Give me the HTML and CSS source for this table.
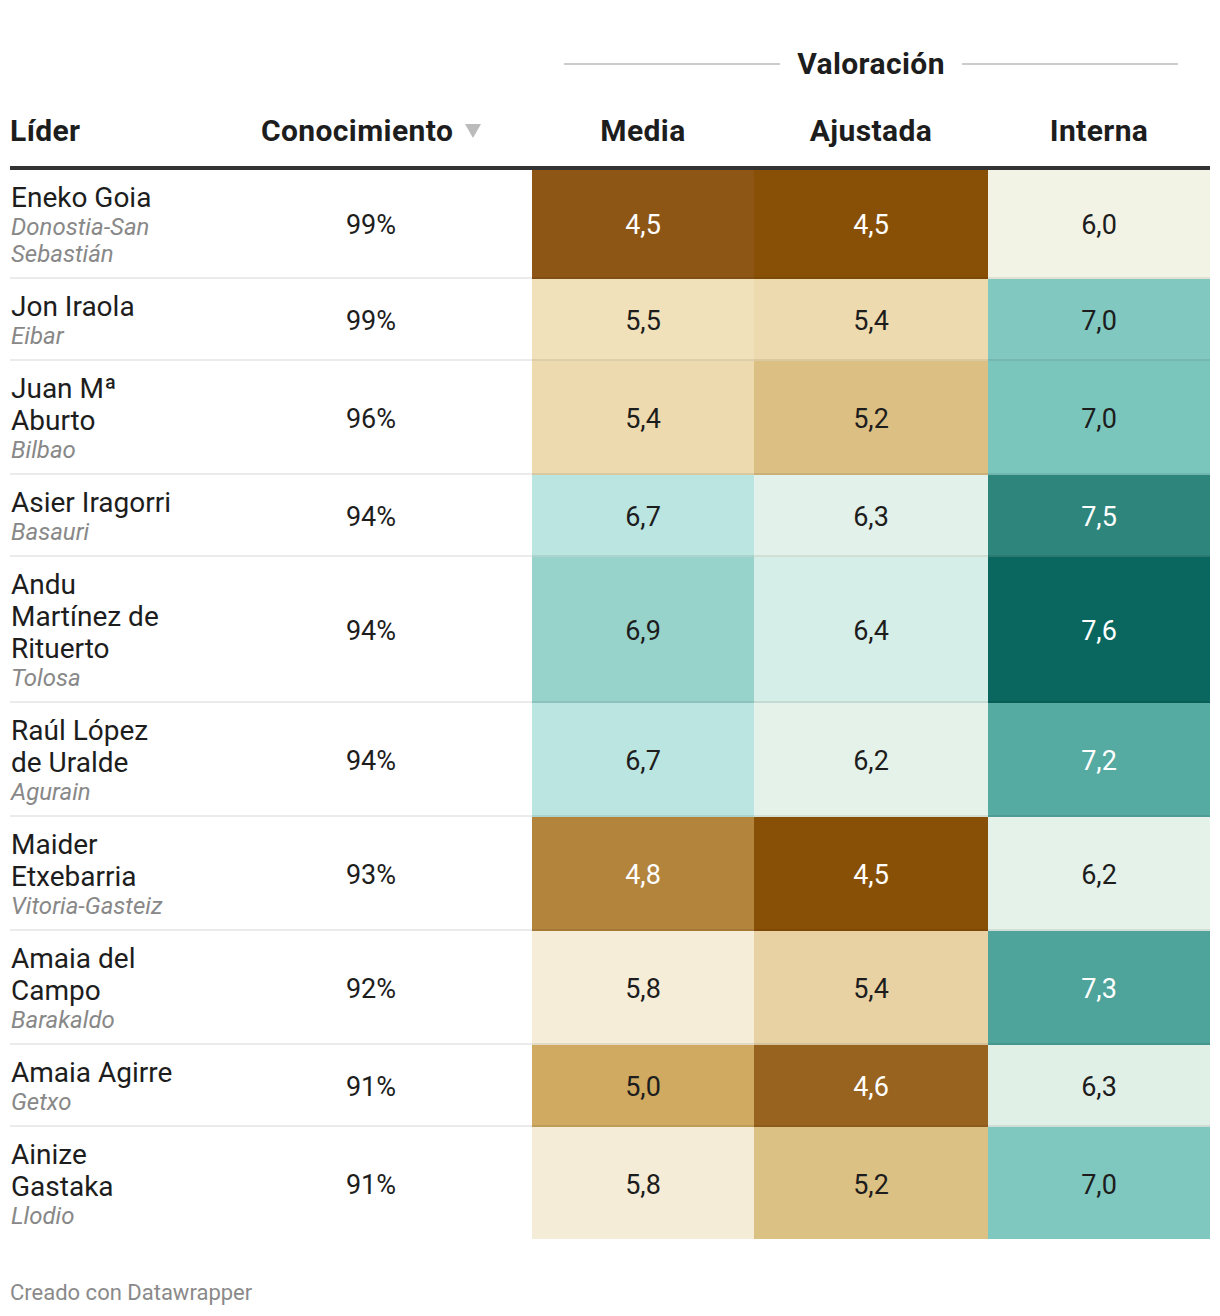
FILE: index.html
```html
<!DOCTYPE html>
<html lang="es">
<head>
<meta charset="utf-8">
<title>Valoración de líderes</title>
<link rel="stylesheet" href="styles.css">
</head>
<body>
<div class="chart">
  <table class="dw-table">
    <colgroup>
      <col class="c-lider">
      <col class="c-con">
      <col class="c-media">
      <col class="c-ajus">
      <col class="c-int">
    </colgroup>
    <thead>
      <tr class="group-row">
        <th colspan="2" class="empty"></th>
        <th colspan="3" class="group">
          <div class="group-label"><span class="gline"></span><span class="gtext">Valoración</span><span class="gline"></span></div>
        </th>
      </tr>
      <tr class="head-row">
        <th class="h-left">Líder</th>
        <th class="h-center">Conocimiento <svg class="sort" width="16" height="14" viewBox="0 0 16 14"><polygon points="0,0 16,0 8,14" fill="#bbbbbb"/></svg></th>
        <th class="h-center">Media</th>
        <th class="h-center">Ajustada</th>
        <th class="h-center">Interna</th>
      </tr>
    </thead>
    <tbody>
      <tr>
        <td class="lider"><div class="name">Eneko Goia</div><div class="city">Donostia-San Sebastián</div></td>
        <td class="num">99%</td>
        <td class="num light" style="background:#8e5615">4,5</td>
        <td class="num light" style="background:#885006">4,5</td>
        <td class="num" style="background:#f3f3e5">6,0</td>
      </tr>
      <tr>
        <td class="lider"><div class="name">Jon Iraola</div><div class="city">Eibar</div></td>
        <td class="num">99%</td>
        <td class="num" style="background:#f1e1bb">5,5</td>
        <td class="num" style="background:#eddaaf">5,4</td>
        <td class="num" style="background:#80c8c0">7,0</td>
      </tr>
      <tr>
        <td class="lider"><div class="name">Juan Mª Aburto</div><div class="city">Bilbao</div></td>
        <td class="num">96%</td>
        <td class="num" style="background:#eddaae">5,4</td>
        <td class="num" style="background:#dcbf83">5,2</td>
        <td class="num" style="background:#7ac6bd">7,0</td>
      </tr>
      <tr>
        <td class="lider"><div class="name">Asier Iragorri</div><div class="city">Basauri</div></td>
        <td class="num">94%</td>
        <td class="num" style="background:#bbe5e0">6,7</td>
        <td class="num" style="background:#e2f1e9">6,3</td>
        <td class="num light" style="background:#2e857b">7,5</td>
      </tr>
      <tr>
        <td class="lider"><div class="name">Andu Martínez de Rituerto</div><div class="city">Tolosa</div></td>
        <td class="num">94%</td>
        <td class="num" style="background:#97d3cb">6,9</td>
        <td class="num" style="background:#d5eee8">6,4</td>
        <td class="num light" style="background:#09675f">7,6</td>
      </tr>
      <tr>
        <td class="lider"><div class="name">Raúl López de Uralde</div><div class="city">Agurain</div></td>
        <td class="num">94%</td>
        <td class="num" style="background:#bbe5e0">6,7</td>
        <td class="num" style="background:#e5f2e9">6,2</td>
        <td class="num light" style="background:#55aaa1">7,2</td>
      </tr>
      <tr>
        <td class="lider"><div class="name">Maider Etxebarria</div><div class="city">Vitoria-Gasteiz</div></td>
        <td class="num">93%</td>
        <td class="num light" style="background:#b2843c">4,8</td>
        <td class="num light" style="background:#885006">4,5</td>
        <td class="num" style="background:#e5f2e9">6,2</td>
      </tr>
      <tr>
        <td class="lider"><div class="name">Amaia del Campo</div><div class="city">Barakaldo</div></td>
        <td class="num">92%</td>
        <td class="num" style="background:#f5edd8">5,8</td>
        <td class="num" style="background:#e8d2a4">5,4</td>
        <td class="num light" style="background:#4ea39a">7,3</td>
      </tr>
      <tr>
        <td class="lider"><div class="name">Amaia Agirre</div><div class="city">Getxo</div></td>
        <td class="num">91%</td>
        <td class="num" style="background:#cfaa60">5,0</td>
        <td class="num light" style="background:#98621f">4,6</td>
        <td class="num" style="background:#e1f0e7">6,3</td>
      </tr>
      <tr class="last">
        <td class="lider"><div class="name">Ainize Gastaka</div><div class="city">Llodio</div></td>
        <td class="num">91%</td>
        <td class="num" style="background:#f4ecd7">5,8</td>
        <td class="num" style="background:#dcc185">5,2</td>
        <td class="num" style="background:#7fc8c0">7,0</td>
      </tr>
    </tbody>
  </table>
  <div class="footer">Creado con Datawrapper</div>
</div>
</body>
</html>
```
FILE: styles.css
```css
* { box-sizing: border-box; }

html, body {
  margin: 0;
  padding: 0;
  background: #ffffff;
}

body {
  font-family: Roboto, "Liberation Sans", Arial, sans-serif;
  color: #1d1d1d;
}

.chart {
  padding: 44px 10px 0 10px;
}

.dw-table {
  width: 1200px;
  table-layout: fixed;
  border-collapse: separate;
  border-spacing: 0;
}

.c-lider { width: 200px; }
.c-con { width: 322px; }
.c-media { width: 222px; }
.c-ajus { width: 234px; }
.c-int { width: 222px; }

th {
  padding: 0;
  font-weight: 700;
  color: #1d1d1d;
}

.group-row th {
  height: 40px;
  vertical-align: middle;
}

.group {
  padding: 0 32px !important;
}

.group-label {
  display: flex;
  align-items: center;
  gap: 17px;
}

.gline {
  flex: 1;
  height: 2px;
  background: #cccccc;
}

.gtext {
  font-size: 30px;
  line-height: 40px;
  letter-spacing: 0.4px;
  font-weight: 700;
}

.head-row th {
  font-size: 30px;
  line-height: 34px;
  letter-spacing: 0.4px;
  padding: 30px 0 18px 0;
  border-bottom: 4px solid #333333;
  vertical-align: bottom;
  white-space: nowrap;
}

.h-left { text-align: left; }
.h-center { text-align: center; }

.sort {
  display: inline-block;
  vertical-align: middle;
  margin-left: 4px;
  position: relative;
  top: -2px;
}

td {
  padding: 12px 0 9px 0;
  border-bottom: 2px solid rgba(0, 0, 0, 0.08);
  vertical-align: middle;
}

tr.last td {
  border-bottom: none;
}

.lider {
  padding-left: 1px;
  padding-right: 36px;
  vertical-align: top;
}

.name {
  font-size: 28px;
  line-height: 32px;
  color: #1d1d1d;
}

.city {
  font-size: 24px;
  line-height: 27px;
  font-style: italic;
  color: #888888;
}

.num {
  font-size: 27px;
  line-height: 32px;
  text-align: center;
  color: #1d1d1d;
}

.num.light {
  color: #ffffff;
}

.footer {
  padding-top: 42px;
  font-size: 22px;
  line-height: 24px;
  color: #8a8a8a;
}
```
